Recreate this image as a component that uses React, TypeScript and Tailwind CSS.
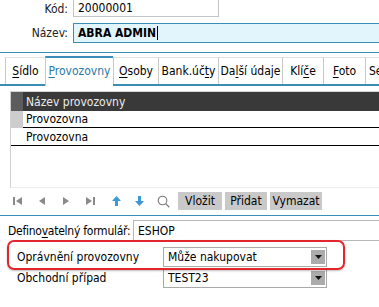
import React from "react";

function Tab({ children, w, active }: { children: React.ReactNode; w: number; active?: boolean }) {
  return (
    <div
      style={{ width: w }}
      className={
        active
          ? "shrink-0 h-[30px] -mb-[2px] bg-white border-t-2 border-t-[#3a8db5] border-l border-l-[#c8c8c8] flex items-center justify-center pb-[3px] text-[#2b79a6] whitespace-nowrap overflow-hidden"
          : "shrink-0 h-[27px] bg-white border-t border-t-[#e2e2e2] border-l border-l-[#c8c8c8] flex items-center justify-center whitespace-nowrap overflow-hidden"
      }
    >
      <span>{children}</span>
    </div>
  );
}

function U({ children }: { children: React.ReactNode }) {
  return <span className="underline underline-offset-2">{children}</span>;
}

function Select({ value }: { value: string }) {
  return (
    <div className="ml-auto mr-[52px] w-[164px] h-[20px] border border-[#a9a9a9] flex items-stretch bg-white">
      <div className="flex-1 flex items-center pl-[4px]">{value}</div>
      <div className="w-[14px] my-[2px] mr-[1px] bg-[#ababab] flex items-center justify-center">
        <svg width="7" height="4" viewBox="0 0 7 4">
          <path d="M0 0h7L3.5 4z" fill="#111" />
        </svg>
      </div>
    </div>
  );
}

export default function App() {
  return (
    <div className="relative w-[379px] h-[307px] overflow-hidden bg-white text-[12px] text-black leading-none font-['DejaVu_Sans_Condensed','DejaVu_Sans',sans-serif]">
      {/* Kód */}
      <div className="flex h-[17px]">
        <div className="w-[68px] flex items-center justify-end text-[#222]">Kód:</div>
        <div className="ml-[5px] w-[146px] border-l border-r border-b border-[#c4c4c4] flex items-center pl-[4px]">
          20000001
        </div>
      </div>
      {/* Název */}
      <div className="flex h-[20px] mt-[6px]">
        <div className="w-[68px] flex items-center justify-end text-[#222]">Název:</div>
        <div className="ml-[5px] flex-1 -mr-[2px] border border-[#3a8db5] bg-[#e2f5fd] flex items-center pl-[4px] font-bold">
          <span>ABRA ADMIN</span>
          <span className="w-px h-[14px] bg-black ml-[1px]" />
        </div>
      </div>
      <div className="mt-[9px] h-px bg-[#3a8db5]" />

      {/* Tabs */}
      <div className="flex items-end h-[33px] border-b-2 border-[#3a8db5] pl-[5px]">
        <Tab w={40}>
          <U>S</U>ídlo
        </Tab>
        <Tab w={68} active>
          <U>P</U>rovozovny
        </Tab>
        <Tab w={45}>
          <U>O</U>soby
        </Tab>
        <Tab w={60}>
          Bank.úč<U>t</U>y
        </Tab>
        <Tab w={64}>
          Da<U>l</U>ší údaje
        </Tab>
        <Tab w={41}>
          Klí<U>č</U>e
        </Tab>
        <Tab w={42}>
          <U>F</U>oto
        </Tab>
        <div className="shrink-0 h-[27px] w-[40px] bg-white border-t border-t-[#e2e2e2] border-l border-l-[#c8c8c8] flex items-center pl-[3px] whitespace-nowrap">
          <span>Se</span>
        </div>
      </div>

      {/* Grid */}
      <div className="ml-[10px] mt-[5px] h-[97px] border-t border-[#d6d6d6] border-l border-l-[#d0d0d0] border-b border-b-[#ececec] flex flex-col">
        <div className="flex h-[19px]">
          <div className="w-[12px] bg-[#5c5c5c]" />
          <div className="flex-1 bg-[#393939] text-[#ececec] flex items-center pl-[3px]">Název provozovny</div>
        </div>
        <div className="flex h-[17px]">
          <div className="w-[12px] bg-[#cdcdcd]" />
          <div className="flex-1 border-b border-black flex items-center pl-[3px]">Provozovna</div>
        </div>
        <div className="flex h-[18px] border-b border-black">
          <div className="w-[12px]" />
          <div className="flex-1 flex items-center pl-[3px]">Provozovna</div>
        </div>
      </div>

      {/* Toolbar */}
      <div className="flex items-center h-[22px] mt-[2px]">
        <div className="w-[13px]" />
        <svg width="10" height="8" viewBox="0 0 10 8">
          <rect x="0" y="0" width="2" height="8" fill="#8a8a8a" />
          <path d="M9 0v8L3 4z" fill="#8a8a8a" />
        </svg>
        <div className="w-[15px]" />
        <svg width="8" height="8" viewBox="0 0 8 8">
          <path d="M7 0v8L1 4z" fill="#8a8a8a" />
        </svg>
        <div className="w-[16px]" />
        <svg width="8" height="8" viewBox="0 0 8 8">
          <path d="M1 0v8l6-4z" fill="#8a8a8a" />
        </svg>
        <div className="w-[15px]" />
        <svg width="10" height="8" viewBox="0 0 10 8">
          <path d="M1 0v8l6-4z" fill="#8a8a8a" />
          <rect x="8" y="0" width="2" height="8" fill="#8a8a8a" />
        </svg>
        <div className="w-[17px]" />
        <svg width="9" height="10" viewBox="0 0 9 10">
          <path d="M4.5 0L9 5H6v5H3V5H0z" fill="#3d98d6" />
        </svg>
        <div className="w-[14px]" />
        <svg width="9" height="10" viewBox="0 0 9 10">
          <path d="M4.5 10L9 5H6V0H3v5H0z" fill="#3d98d6" />
        </svg>
        <div className="w-[13px]" />
        <svg width="13" height="13" viewBox="0 0 13 13">
          <circle cx="5.5" cy="5.5" r="4.3" fill="none" stroke="#7a7a7a" strokeWidth="1.1" />
          <path d="M8.6 8.6L12.3 12.3" stroke="#7a7a7a" strokeWidth="1.3" />
        </svg>
        <div className="w-[8px]" />
        <div className="flex gap-[3px] h-[18px]">
          <div className="w-[44px] bg-[#c9c9c9] flex items-center justify-center">Vložit</div>
          <div className="w-[42px] bg-[#c9c9c9] flex items-center justify-center">Přidat</div>
          <div className="w-[52px] bg-[#c9c9c9] flex items-center justify-center">Vymazat</div>
        </div>
      </div>
      <div className="mt-[3px] h-px bg-[#3a8db5]" />

      {/* Definovatelný formulář */}
      <div className="flex h-[21px] mt-[4px]">
        <div className="w-[133px] shrink-0 pl-[8px] flex items-center whitespace-nowrap tracking-[-0.25px]">
          <span>
            Defino<U>v</U>atelný formulář:
          </span>
        </div>
        <div className="flex-1 -mr-[2px] border border-[#b8b8b8] flex items-center pl-[4px]">ESHOP</div>
      </div>

      {/* Oprávnění provozovny */}
      <div className="flex h-[20px] mt-[6px]">
        <div className="pl-[17px] flex items-center">Oprávnění provozovny</div>
        <Select value="Může nakupovat" />
      </div>
      {/* Obchodní případ */}
      <div className="flex h-[20px] mt-px">
        <div className="pl-[17px] flex items-center">Obchodní případ</div>
        <Select value="TEST23" />
      </div>

      {/* red highlight */}
      <div className="absolute left-[7px] top-[240px] w-[338px] h-[30px] border-2 border-[#e3262b] rounded-[7px] shadow-[0_1px_2px_rgba(0,0,0,0.25)]" />
    </div>
  );
}
